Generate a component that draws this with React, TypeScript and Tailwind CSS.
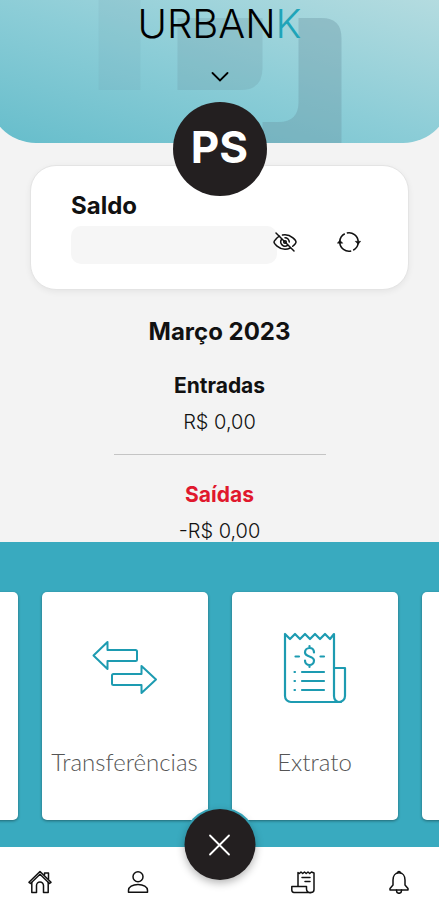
import React, { useState } from 'react';

interface IconProps {
    className?: string;
}

const EyeOffIcon: React.FC<IconProps> = ({ className = '' }) => (
    <svg viewBox="0 0 24 24" className={className} fill="none" stroke="currentColor" strokeWidth="1.5" strokeLinecap="round">
        <path d="M3 3l18 18" />
        <path d="M6.5 6.2C3.4 8 1 11.2 1 12c0 1.2 4.5 7.3 11 7.3 2 0 3.7-.5 5.2-1.300" />
        <path d="M9.5 5C10.3 4.800 11.1 4.700 12 4.700c6.500 0 11 6.100 11 7.300 0 .7-1.300 2.600-3.300 4.300" />
        <path d="M8.600 9.300a4.300 4.300 0 0 0 6 6M12 7.700a4.300 4.300 0 0 1 4.300 4.300" />
        <circle cx="12" cy="12" r="1.3" />
    </svg>
);

const RefreshIcon: React.FC<IconProps> = ({ className = '' }) => (
    <svg viewBox="0 0 24 24" className={className} fill="none" stroke="currentColor" strokeWidth="1.6">
        <path d="M2.800 11.500a9.200 9.200 0 0 1 5-7.700M9.800 3a9.200 9.200 0 0 1 11.400 8.500" />
        <path d="M21.200 12.500a9.200 9.200 0 0 1-5 7.700M14.200 21a9.200 9.200 0 0 1-11.400-8.500" />
        <path d="M.3 13.200l2.500-3 3 3zM18.200 11.300h5.500l-2.500 3z" fill="currentColor" strokeWidth=".5" />
    </svg>
);

const TransferIcon: React.FC<IconProps> = ({ className = '' }) => (
    <svg viewBox="0 0 66 56" className={className} fill="none" stroke="currentColor" strokeWidth="2" strokeLinejoin="round">
        <path d="M1.500 15.500L15.500 2v8H43.500a1.500 1.500 0 0 1 1.500 1.500v8a1.500 1.500 0 0 1-1.500 1.500H15.500v8z" />
        <path d="M64 39.500L49.500 26v8H21.500a1.500 1.500 0 0 0-1.500 1.500v8a1.500 1.500 0 0 0 1.500 1.500h28v8z" />
    </svg>
);

const StatementIcon: React.FC<IconProps> = ({ className = '' }) => (
    <svg viewBox="0 0 64 72" className={className} fill="none" stroke="currentColor" strokeWidth="2.2" strokeLinejoin="round" strokeLinecap="round">
        <path d="M51 64V2l-4 5-5-5-5 5-5-5-5 5-5-5-5 5-5-5-5 5-5-5v62a6 6 0 0 0 6 6h50" />
        <path d="M51 36h11v28a6 6 0 0 1-6 6 5 6 0 0 1-5-6" />
        <path d="M31 20.500c0-3-2-4.500-4.500-4.500S22 18 22 20.500c0 5 9 3 9 8 0 2.500-2 4.500-4.500 4.500S22 31 22 28.500M26.500 14v2M26.500 33v2" />
        <path d="M12.500 24.500h3.500M37.500 24.500h3.500" />
        <path d="M19 40h22M19 49h22M19 58h22M11.500 40h.5M11.500 49h.5M11.500 58h.5" />
    </svg>
);

const HomeIcon: React.FC<IconProps> = ({ className = '' }) => (
    <svg viewBox="0 0 24 24" className={className} fill="none" stroke="currentColor" strokeWidth="1.5" strokeLinejoin="round" strokeLinecap="round">
        <path d="M1 12.300L12 1.500l11 10.800-1.500 1.200L12 4.300l-9.500 9.200z" />
        <path d="M3.800 12.500v10h4.700v-7a3.500 3.500 0 0 1 7 0v7h4.700v-10M16.500 5V3h4v6" />
    </svg>
);

const UserIcon: React.FC<IconProps> = ({ className = '' }) => (
    <svg viewBox="0 0 24 24" className={className} fill="none" stroke="currentColor" strokeWidth="1.5" strokeLinejoin="round">
        <circle cx="12" cy="6.800" r="5" />
        <path d="M2.500 22.300v-2c0-3.300 4-5.800 9.500-5.800s9.500 2.500 9.500 5.800v2z" />
    </svg>
);

const ReceiptIcon: React.FC<IconProps> = ({ className = '' }) => (
    <svg viewBox="0 0 24 24" className={className} fill="none" stroke="currentColor" strokeWidth="1.5" strokeLinejoin="round" strokeLinecap="round">
        <path d="M7 16V2.500l1.400 1L10 2l1.700 1.500L13.500 2l1.700 1.500L17 2l1.700 1.500L20.500 2l2.500 1v16.500a3 3 0 0 1-3 3" />
        <path d="M20 22.500H3A2.500 2.500 0 0 1 .8 20v-3.500h14.700V19a3.500 3.500 0 0 0 4.500 3.500z" />
        <path d="M11 7.500h8M14 11.500h5" />
    </svg>
);

const BellIcon: React.FC<IconProps> = ({ className = '' }) => (
    <svg viewBox="0 0 24 24" className={className} fill="none" stroke="currentColor" strokeWidth="1.5" strokeLinejoin="round" strokeLinecap="round">
        <path d="M12 2.800c-3.800 0-6 3.200-6 7.200v5L3 18.500V20h18v-1.500L18 15v-5c0-4-2.200-7.200-6-7.200z" />
        <path d="M10.700 2.800a1.300 1.300 0 0 1 2.600 0M9.500 20v.8a2.500 2.500 0 0 0 5 0V20" />
    </svg>
);

interface MenuCardProps {
    label?: string;
    children?: React.ReactNode;
}

const MenuCard: React.FC<MenuCardProps> = ({ label, children }) => (
    <button
        aria-label={label || 'Mais opções'}
        className="w-[166px] h-[228px] shrink-0 flex flex-col items-center justify-between rounded-[5px] bg-white pt-9 pb-11 text-[#1d9bb1] shadow-[0_1px_3px_rgba(0,0,0,0.4)]"
    >
        <span className="flex h-[80px] items-center">{children}</span>
        <span className="font-['Lato',sans-serif] text-[24px] leading-7 font-light text-[#555555]">{label}</span>
    </button>
);

const App: React.FC = () => {
    const [visible, setVisible] = useState(false);

    return (
        <div className="flex h-screen flex-col overflow-hidden bg-[#f3f3f3] font-['Inter',sans-serif] text-[#111111]">
            <header className="relative -mx-3 flex h-[143px] shrink-0 flex-col items-center overflow-hidden rounded-b-[48px] bg-linear-to-tr from-[#65bdcb] via-[#8ccdd7] to-[#b5dce0]">
                {/* Brand watermark */}
                <svg viewBox="0 0 439 143" className="absolute left-1/2 h-[143px] w-[439px] -translate-x-1/2" fill="#6c97a3" fillOpacity="0.26" aria-hidden="true">
                    <path d="M98 0h42v90H98z" fillOpacity="0.12" />
                    <path d="M177 18h85v50q0 22-22 22h-63z" />
                    <path d="M298 18h23q20 0 20 20v105h-79v-21h16q20 0 20-20z" fillOpacity="0.38" />
                </svg>
                <h1 className="relative mt-1 text-[40px] leading-10 font-light text-black">
                    URBAN<span className="text-[#20a4b8]">K</span>
                </h1>
                <button aria-label="Abrir conta" className="relative mt-[21px] flex h-6 w-6 items-center justify-center">
                    <svg viewBox="0 0 18 10" className="h-[10px] w-[18px]" fill="none" stroke="#000" strokeWidth="1.8" strokeLinecap="round">
                        <path d="M1.500 1L9 8.500 16.500 1" />
                    </svg>
                </button>
            </header>

            <main className="min-h-0 flex-1">
                <section className="relative mx-[30px] mt-[22px] h-[125px] rounded-[26px] border border-[#e4e4e4] bg-white px-10 pt-6 shadow-[0_2px_6px_rgba(0,0,0,0.06)]">
                    <div className="absolute -top-[64px] left-1/2 flex h-[94px] w-[94px] -translate-x-1/2 items-center justify-center rounded-full bg-[#231f20] pb-1 text-[44px] leading-none font-bold text-white">
                        PS
                    </div>
                    <h2 className="text-[24px] leading-8 font-bold">Saldo</h2>
                    <div className="mt-1 flex items-start">
                        <div className="h-[38px] w-[206px] rounded-[10px] bg-[#f6f6f6]" />
                        <button aria-label="Mostrar saldo" aria-pressed={visible} onClick={() => setVisible(!visible)} className="-ml-1 mt-1">
                            <EyeOffIcon className="h-6 w-6" />
                        </button>
                        <button aria-label="Atualizar saldo" className="mt-1 ml-10">
                            <RefreshIcon className="h-6 w-6" />
                        </button>
                    </div>
                </section>

                <section className="flex flex-col items-center text-center">
                    <h2 className="mt-[26px] text-[24px] leading-8 font-bold">Março 2023</h2>
                    <h3 className="mt-6 text-[21px] leading-7 font-bold">Entradas</h3>
                    <p className="mt-2 text-[20px] leading-7 font-light">R$ 0,00</p>
                    <hr className="mt-[18px] w-[212px] border-[#c4c4c4]" />
                    <h3 className="mt-[26px] text-[21px] leading-7 font-bold text-[#e0182d]">Saídas</h3>
                    <p className="mt-2 text-[20px] leading-7 font-light">-R$ 0,00</p>
                </section>
            </main>

            <section className="relative flex h-[305px] shrink-0 justify-center gap-6 overflow-hidden bg-[#39aabf] pt-[50px]">
                <MenuCard />
                <MenuCard label="Transferências">
                    <TransferIcon className="h-[56px] w-[66px]" />
                </MenuCard>
                <MenuCard label="Extrato">
                    <StatementIcon className="h-[72px] w-[64px]" />
                </MenuCard>
                <MenuCard />
                <div className="absolute -bottom-9 left-1/2 h-[76px] w-[76px] -translate-x-1/2 rounded-full bg-[#39aabf]" />
            </section>

            <nav className="relative flex h-[53px] shrink-0 items-center justify-between bg-white px-7 pt-4">
                <div className="flex gap-[74px]">
                    <a href="#inicio" aria-label="Início"><HomeIcon className="h-6 w-6" /></a>
                    <a href="#perfil" aria-label="Perfil"><UserIcon className="h-6 w-6" /></a>
                </div>
                <button aria-label="Fechar menu" className="absolute -top-[38px] left-1/2 flex h-[71px] w-[71px] -translate-x-1/2 items-center justify-center rounded-full bg-[#231f20] text-white shadow-[0_3px_8px_rgba(0,0,0,0.3)]">
                    <svg viewBox="0 0 22 22" className="h-[22px] w-[22px]" fill="none" stroke="currentColor" strokeWidth="1.8" strokeLinecap="round">
                        <path d="M1.500 1.500l19 19M20.500 1.500l-19 19" />
                    </svg>
                </button>
                <div className="flex gap-[72px]">
                    <a href="#extrato" aria-label="Extrato"><ReceiptIcon className="h-6 w-6" /></a>
                    <a href="#avisos" aria-label="Notificações"><BellIcon className="h-6 w-6" /></a>
                </div>
            </nav>
        </div>
    );
};

export default App;
